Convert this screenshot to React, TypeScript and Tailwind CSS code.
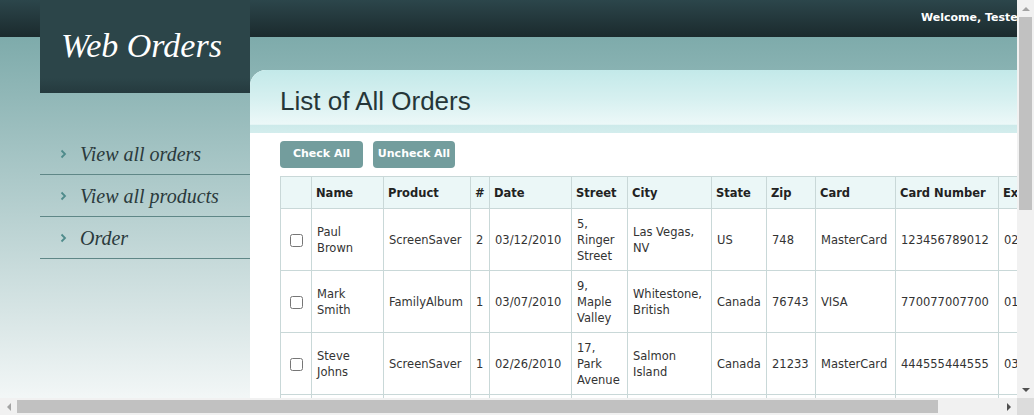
import { Pencil } from 'lucide-react';

const orders = [
  ['Paul Brown', 'ScreenSaver', '2', '03/12/2010', '5, Ringer Street', 'Las Vegas, NV', 'US', '748', 'MasterCard', '123456789012', '02/24'],
  ['Mark Smith', 'FamilyAlbum', '1', '03/07/2010', '9, Maple Valley', 'Whitestone, British', 'Canada', '76743', 'VISA', '770077007700', '01/11'],
  ['Steve Johns', 'ScreenSaver', '1', '02/26/2010', '17, Park Avenue', 'Salmon Island', 'Canada', '21233', 'MasterCard', '444555444555', '03/11'],
  ['Charles Dodgeson', 'MyMoney', '3', '02/20/2010', '1, Upper Terrace', 'Old Paris', 'US', '75201', 'VISA', '333444333444', '05/12'],
  ['Susan McLaren', 'MyMoney', '1', '01/05/2010', '10, Holland Road', 'Lawrenceville', 'US', '85123', 'MasterCard', '123412341234', '07/11'],
  ['Bob Feather', 'FamilyAlbum', '2', '12/31/2009', '21, Snow Lane', 'Reston', 'US', '20190', 'VISA', '556677889900', '09/12'],
  ['Samuel Clemens', 'ScreenSaver', '1', '12/21/2009', '3, Main Street', 'Hannibal', 'US', '63401', 'MasterCard', '789078907890', '11/11'],
  ['Clare Jefferson', 'FamilyAlbum', '4', '12/04/2009', '8, Oak Road', 'Charlotte', 'US', '28202', 'VISA', '111222333444', '04/12'],
];

const columns = [
  { label: '', w: 'w-[31px]' },
  { label: 'Name', w: 'w-[72px]' },
  { label: 'Product', w: 'w-[87px]' },
  { label: '#', w: 'w-[19px]' },
  { label: 'Date', w: 'w-[82px]' },
  { label: 'Street', w: 'w-[56px]' },
  { label: 'City', w: 'w-[84px]' },
  { label: 'State', w: 'w-[55px]' },
  { label: 'Zip', w: 'w-[49px]' },
  { label: 'Card', w: 'w-[80px]' },
  { label: 'Card Number', w: 'w-[103px]' },
  { label: 'Exp', w: 'w-[55px]' },
  { label: '', w: 'w-[30px]' },
];

const menu = ['View all orders', 'View all products', 'Order'];

const Chevron = () => (
  <svg width="7" height="10" viewBox="0 0 7 10" className="shrink-0">
    <polyline points="1.5,1.5 5,5 1.5,8.5" fill="none" stroke="#4f8b8b" strokeWidth="1.8" />
  </svg>
);

// little triangles for the scrollbar buttons
const Arrow = ({ dir, color }: { dir: 'up' | 'down' | 'left' | 'right'; color: string }) => {
  const pts = {
    up: '4,1 8,5 0,5',
    down: '0,1 8,1 4,5',
    left: '5,0 5,8 1,4',
    right: '1,0 1,8 5,4',
  }[dir];
  const vertical = dir === 'up' || dir === 'down';
  return (
    <svg width={vertical ? 8 : 6} height={vertical ? 6 : 8} viewBox={vertical ? '0 0 8 6' : '0 0 6 8'}>
      <polygon points={pts} fill={color} />
    </svg>
  );
};

const Page = () => (
  <div
    className="w-[1085px] flex bg-[linear-gradient(to_bottom,#2c464b_0px,#1b2a2d_37px,#7eabab_37px,#f3f7f7_400px,#ffffff_520px)]"
    style={{ fontFamily: '"DejaVu Sans", Verdana, sans-serif' }}
  >
    {/* sidebar */}
    <div className="w-[250px] shrink-0 pl-[40px]">
      <div className="h-[93px] bg-[linear-gradient(to_bottom,#2c4549_0px,#2c4549_78px,#253a3e_93px)] flex items-center pl-[21px] pb-[1px]">
        <span className="text-white italic text-[34px] leading-none" style={{ fontFamily: '"Liberation Serif", Georgia, serif' }}>
          Web Orders
        </span>
      </div>
      <ul className="mt-[40px]">
        {menu.map((item) => (
          <li key={item} className="h-[42px] border-b border-[#5f8787] flex items-center gap-[13px] pl-[20px]">
            <Chevron />
            <span className="italic text-[20px] text-[#2b3a3c]" style={{ fontFamily: '"Liberation Serif", Georgia, serif' }}>
              {item}
            </span>
          </li>
        ))}
      </ul>
    </div>

    {/* main */}
    <div className="flex-1 flex flex-col">
      <div className="h-[37px] flex items-center justify-end pr-[2px] pb-[1px]">
        <span className="text-white font-bold text-[11px]">Welcome, Tester! | Logout</span>
      </div>
      <div className="mt-[33px] bg-white rounded-tl-[16px] overflow-hidden pb-[40px]">
        <div className="h-[63px] pl-[30px] flex items-center bg-[linear-gradient(to_bottom,#c3e9e9_0%,#d6f0f0_45%,#ecf8f8_86%,#cdeaea_88%,#d3eded_100%)]">
          <h1 className="text-[26px] text-[#253638]" style={{ fontFamily: '"Liberation Sans", Arial, sans-serif' }}>
            List of All Orders
          </h1>
        </div>
        <div className="pl-[30px] pt-[8px]">
          <div className="flex gap-[10px]">
            <button className="h-[27px] w-[83px] rounded-[4px] bg-[#739d9d] text-white font-bold text-[11px]">Check All</button>
            <button className="h-[27px] w-[82px] rounded-[4px] bg-[#739d9d] text-white font-bold text-[11px]">Uncheck All</button>
          </div>
          <table className="mt-[8px] w-[803px] table-fixed border-collapse text-[11.5px] leading-[16px] text-[#333]">
            <thead>
              <tr className="h-[32px] bg-[#ebf7f7]">
                {columns.map((c, i) => (
                  <th key={i} className={`${c.w} border border-[#c9d8d8] px-[4px] text-left font-bold text-[#222] whitespace-nowrap overflow-hidden`}>
                    {c.label}
                  </th>
                ))}
              </tr>
            </thead>
            <tbody>
              {orders.map((o, r) => (
                <tr key={r} className="h-[62px]">
                  <td className="border border-[#c9d8d8] text-center">
                    <input type="checkbox" className="align-middle" />
                  </td>
                  {o.map((v, i) => (
                    <td key={i} className="border border-[#c9d8d8] px-[5px] py-[6px] align-middle overflow-hidden">
                      {v}
                    </td>
                  ))}
                  <td className="border border-[#c9d8d8] text-center">
                    <Pencil size={13} className="inline text-[#5a8a8a]" />
                  </td>
                </tr>
              ))}
            </tbody>
          </table>
          <button className="mt-[12px] h-[27px] px-[13px] rounded-[4px] bg-[#739d9d] text-white font-bold text-[11px]">Delete Selected</button>
        </div>
      </div>
    </div>
  </div>
);

const App = () => {
  return (
    <div className="w-[1034px] h-[415px] flex bg-white overflow-hidden">
      <div className="w-[1017px] flex flex-col">
        {/* viewport */}
        <div className="h-[398px] overflow-hidden">
          <Page />
        </div>
        {/* horizontal scrollbar */}
        <div className="h-[17px] bg-[#f1f1f1] flex items-center">
          <div className="w-[17px] h-[17px] flex items-center justify-center">
            <Arrow dir="left" color="#a3a3a3" />
          </div>
          <div className="flex-1 h-[17px] py-[2px]">
            <div className="w-[921px] h-full bg-[#c1c1c1]" />
          </div>
          <div className="w-[17px] h-[17px] flex items-center justify-center">
            <Arrow dir="right" color="#505050" />
          </div>
        </div>
      </div>
      {/* vertical scrollbar */}
      <div className="w-[17px] flex flex-col">
        <div className="h-[398px] bg-[#f1f1f1] flex flex-col">
          <div className="h-[17px] flex items-center justify-center">
            <Arrow dir="up" color="#a3a3a3" />
          </div>
          <div className="flex-1 px-[2px]">
            <div className="h-[193px] bg-[#c1c1c1]" />
          </div>
          <div className="h-[17px] flex items-center justify-center">
            <Arrow dir="down" color="#505050" />
          </div>
        </div>
        <div className="h-[17px] bg-[#dcdcdc]" />
      </div>
    </div>
  );
};

export default App;
